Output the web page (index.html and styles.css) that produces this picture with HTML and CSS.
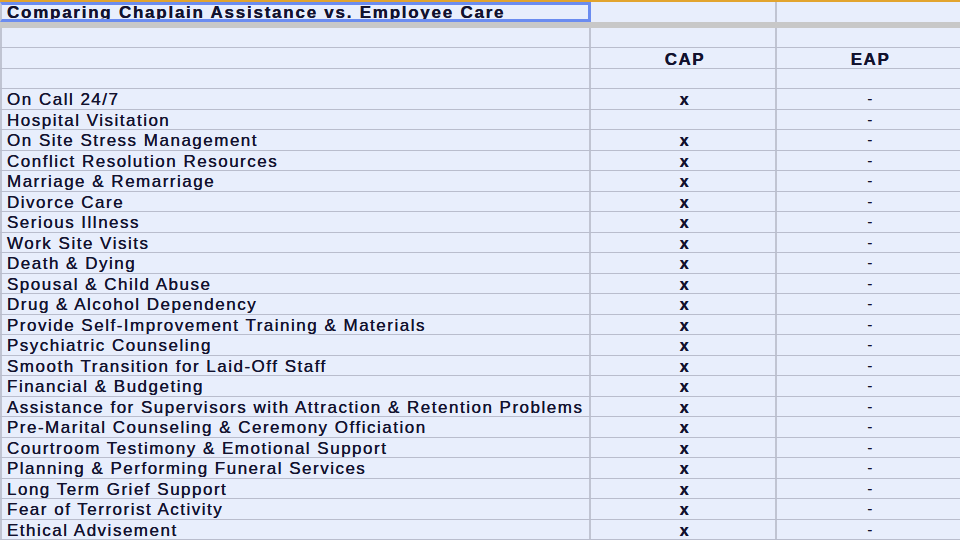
FILE: index.html
```html
<!DOCTYPE html>
<html>
<head>
<meta charset="utf-8">
<link rel="stylesheet" href="styles.css">
</head>
<body>
<div class="sheet">
  <div class="row title-row">
    <div class="cell label title">Comparing Chaplain Assistance vs. Employee Care</div>
    <div class="cell"></div>
    <div class="cell last"></div>
  </div>
  <div class="band"></div>
  <div class="row"><div class="cell label"></div><div class="cell"></div><div class="cell last"></div></div>
  <div class="row"><div class="cell label"></div><div class="cell mid head">CAP</div><div class="cell last mid head">EAP</div></div>
  <div class="row"><div class="cell label"></div><div class="cell"></div><div class="cell last"></div></div>
  <div class="row"><div class="cell label">On Call 24/7</div><div class="cell mid x">x</div><div class="cell last mid dash">-</div></div>
  <div class="row"><div class="cell label">Hospital Visitation</div><div class="cell mid x"></div><div class="cell last mid dash">-</div></div>
  <div class="row"><div class="cell label">On Site Stress Management</div><div class="cell mid x">x</div><div class="cell last mid dash">-</div></div>
  <div class="row"><div class="cell label">Conflict Resolution Resources</div><div class="cell mid x">x</div><div class="cell last mid dash">-</div></div>
  <div class="row"><div class="cell label">Marriage &amp; Remarriage</div><div class="cell mid x">x</div><div class="cell last mid dash">-</div></div>
  <div class="row"><div class="cell label">Divorce Care</div><div class="cell mid x">x</div><div class="cell last mid dash">-</div></div>
  <div class="row"><div class="cell label">Serious Illness</div><div class="cell mid x">x</div><div class="cell last mid dash">-</div></div>
  <div class="row"><div class="cell label">Work Site Visits</div><div class="cell mid x">x</div><div class="cell last mid dash">-</div></div>
  <div class="row"><div class="cell label">Death &amp; Dying</div><div class="cell mid x">x</div><div class="cell last mid dash">-</div></div>
  <div class="row"><div class="cell label">Spousal &amp; Child Abuse</div><div class="cell mid x">x</div><div class="cell last mid dash">-</div></div>
  <div class="row"><div class="cell label">Drug &amp; Alcohol Dependency</div><div class="cell mid x">x</div><div class="cell last mid dash">-</div></div>
  <div class="row"><div class="cell label">Provide Self-Improvement Training &amp; Materials</div><div class="cell mid x">x</div><div class="cell last mid dash">-</div></div>
  <div class="row"><div class="cell label">Psychiatric Counseling</div><div class="cell mid x">x</div><div class="cell last mid dash">-</div></div>
  <div class="row"><div class="cell label">Smooth Transition for Laid-Off Staff</div><div class="cell mid x">x</div><div class="cell last mid dash">-</div></div>
  <div class="row"><div class="cell label">Financial &amp; Budgeting</div><div class="cell mid x">x</div><div class="cell last mid dash">-</div></div>
  <div class="row"><div class="cell label">Assistance for Supervisors with Attraction &amp; Retention Problems</div><div class="cell mid x">x</div><div class="cell last mid dash">-</div></div>
  <div class="row"><div class="cell label">Pre-Marital Counseling &amp; Ceremony Officiation</div><div class="cell mid x">x</div><div class="cell last mid dash">-</div></div>
  <div class="row"><div class="cell label">Courtroom Testimony &amp; Emotional Support</div><div class="cell mid x">x</div><div class="cell last mid dash">-</div></div>
  <div class="row"><div class="cell label">Planning &amp; Performing Funeral Services</div><div class="cell mid x">x</div><div class="cell last mid dash">-</div></div>
  <div class="row"><div class="cell label">Long Term Grief Support</div><div class="cell mid x">x</div><div class="cell last mid dash">-</div></div>
  <div class="row"><div class="cell label">Fear of Terrorist Activity</div><div class="cell mid x">x</div><div class="cell last mid dash">-</div></div>
  <div class="row"><div class="cell label">Ethical Advisement</div><div class="cell mid x">x</div><div class="cell last mid dash">-</div></div>
</div>
</body>
</html>
```
FILE: styles.css
```css
html, body {
  margin: 0;
  padding: 0;
  background: #e8eefc;
  overflow: hidden;
}
.sheet {
  width: 960px;
  height: 540px;
  overflow: hidden;
  border-top: 2px solid #e2a42e;
  font-family: "Liberation Sans", Arial, sans-serif;
  font-size: 17px;
  color: #12122e;
  letter-spacing: 1.5px;
  text-shadow: 0 0 0.4px #12122e;
}
.row {
  display: grid;
  grid-template-columns: 591px 186px 183px;
  height: 20.52px;
  box-sizing: border-box;
  border-bottom: 1px solid #b9bdcd;
}
.cell {
  box-sizing: border-box;
  border-right: 2px solid #c0c4d2;
  white-space: nowrap;
  overflow: hidden;
  line-height: 21px;
}
.cell.last { border-right: 0; }
.cell.label {
  border-left: 2px solid #c0c4d2;
  padding-left: 5px;
}
.title-row {
  height: 20px;
  border-bottom: 0;
}
.title {
  border: 3px solid #6b8cf0;
  font-weight: bold;
  line-height: 15px;
  padding-left: 4px;
  letter-spacing: 1.75px;
}
.band {
  height: 5.5px;
  background: #c8c8c8;
}
.mid { text-align: center; padding-left: 4px; }
.head { font-weight: bold; padding-top: 1px; }
.x { font-weight: bold; font-size: 16px; }
.dash { font-size: 14px; }
```
